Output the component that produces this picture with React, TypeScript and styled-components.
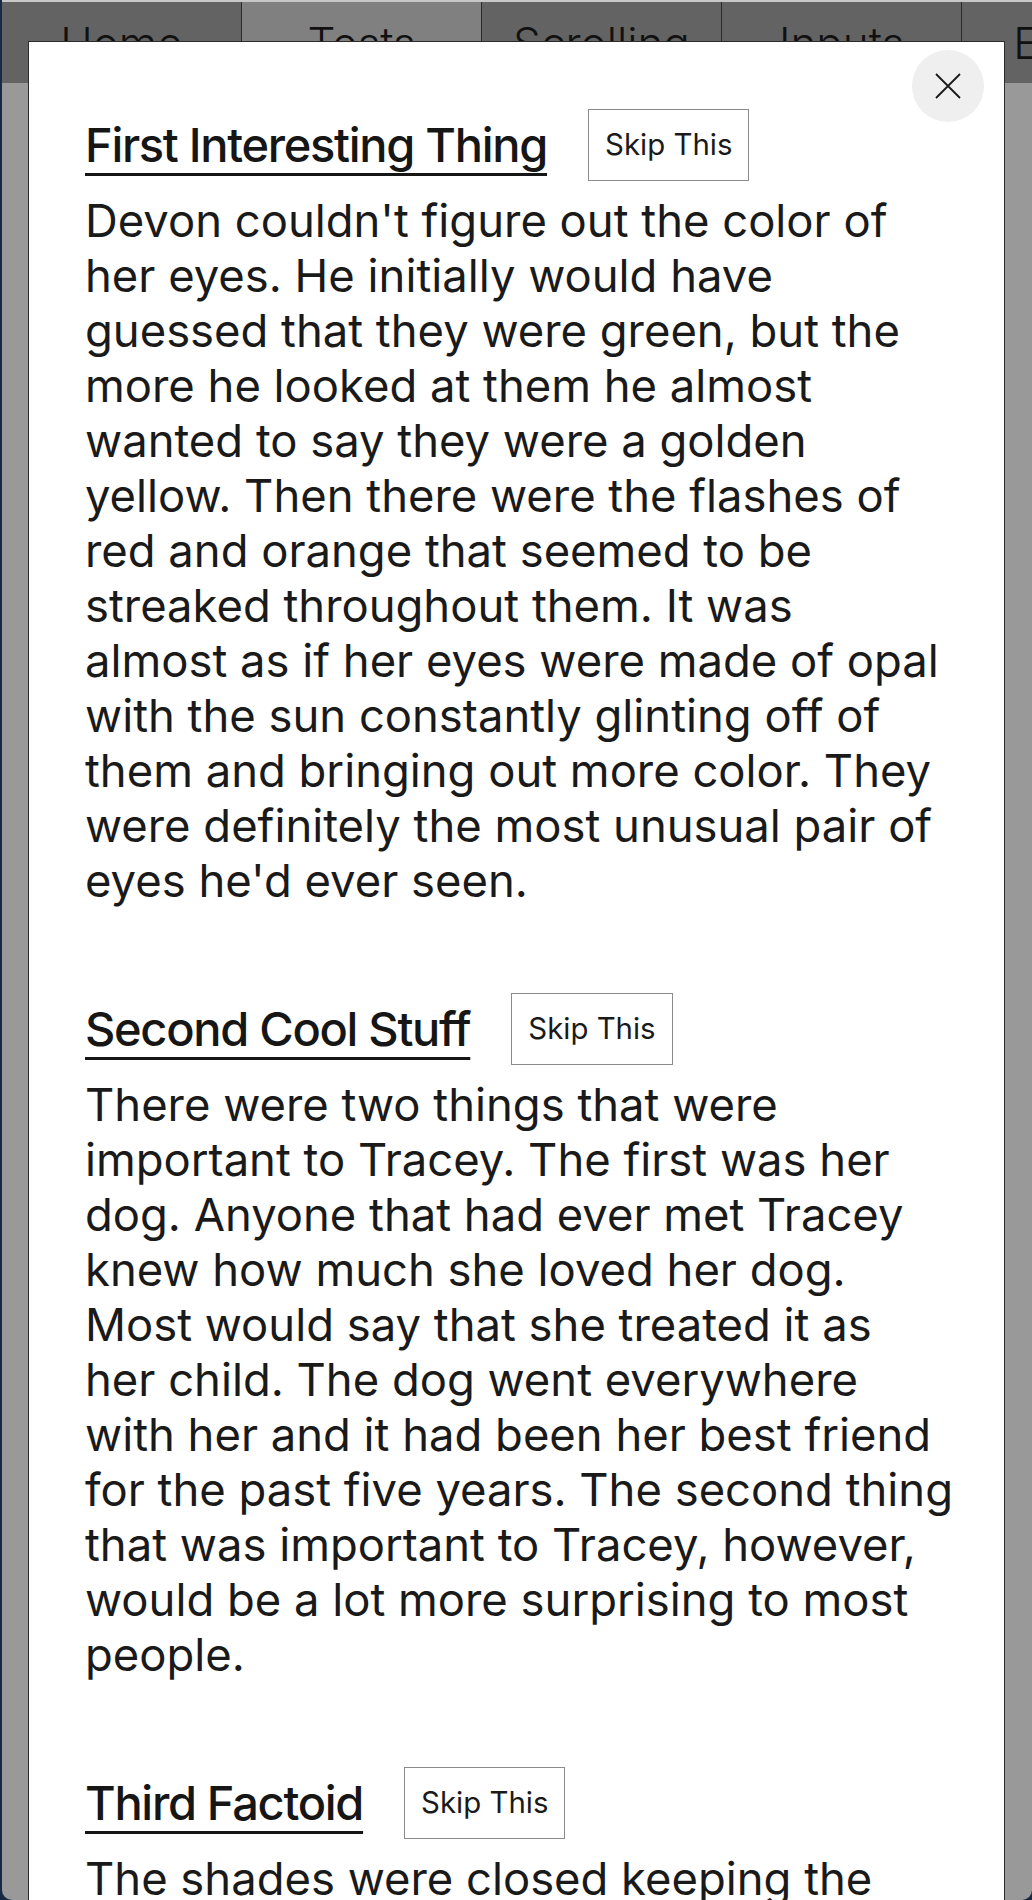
import React from "react";
import styled, { createGlobalStyle } from "styled-components";

const GlobalStyle = createGlobalStyle`
  html, body {
    margin: 0;
    padding: 0;
    background: #172a44;
    font-family: Inter, "Open Sans", sans-serif;
    overflow: hidden;
  }
`;

const Frame = styled.div`
  position: relative;
  margin-left: 2px;
  height: 1900px;
  background: #999999;
  border-radius: 0 0 10px 10px;
  overflow: hidden;
`;

const NavBar = styled.nav`
  display: flex;
  height: 81px;
  border-top: 2px solid #c8c8c8;
  background: #636363;
  overflow: hidden;
`;

const Tab = styled.div<{ $active?: boolean }>`
  flex: 0 0 240px;
  box-sizing: border-box;
  border-right: 1px solid #2a2a2a;
  background: ${(p) => (p.$active ? "#808080" : "#636363")};
  color: #111;
  font-family: Inter, sans-serif;
  font-weight: 300;
  font-size: 44px;
  line-height: 44px;
  padding-top: 19px;
  text-align: center;
  white-space: nowrap;
`;

const Modal = styled.div`
  position: absolute;
  top: 41px;
  left: 26px;
  width: 977px;
  bottom: -400px;
  box-sizing: border-box;
  background: #ffffff;
  border: 1px solid #2b2b2b;
  padding: 67px 40px 0 56px;
  color: #1a1a1a;
`;

const CloseButton = styled.button`
  position: absolute;
  top: 8px;
  right: 20px;
  width: 72px;
  height: 72px;
  border: none;
  border-radius: 50%;
  background: #efefef;
  display: flex;
  align-items: center;
  justify-content: center;
  padding: 0;
  cursor: pointer;
`;

const Section = styled.section`
  & + & {
    margin-top: 85px;
  }
`;

const HeadingRow = styled.div`
  display: flex;
  align-items: center;
  gap: 41px;
  height: 72px;
`;

const Heading = styled.h2`
  margin: 0;
  font-family: Inter, sans-serif;
  font-weight: 500;
  font-size: 47px;
  letter-spacing: -1.3px;
  line-height: 56px;
  color: #161616;
  text-decoration: underline;
  text-decoration-thickness: 3px;
  text-underline-offset: 11px;
  white-space: nowrap;
`;

const SkipButton = styled.button`
  box-sizing: border-box;
  height: 72px;
  padding: 0 16px;
  background: #ffffff;
  border: 1px solid #8a8a8a;
  border-radius: 0;
  font-family: Inter, sans-serif;
  font-size: 29.4px;
  line-height: 36px;
  color: #1a1a1a;
  white-space: nowrap;
  cursor: pointer;
`;

const Paragraph = styled.p`
  margin: 12px 0 0 0;
  font-family: Inter, sans-serif;
  font-size: 45.4px;
  line-height: 55px;
  color: #1a1a1a;
  white-space: nowrap;
`;

const sections = [
  {
    title: "First Interesting Thing",
    lines: [
      "Devon couldn't figure out the color of",
      "her eyes. He initially would have",
      "guessed that they were green, but the",
      "more he looked at them he almost",
      "wanted to say they were a golden",
      "yellow. Then there were the flashes of",
      "red and orange that seemed to be",
      "streaked throughout them. It was",
      "almost as if her eyes were made of opal",
      "with the sun constantly glinting off of",
      "them and bringing out more color. They",
      "were definitely the most unusual pair of",
      "eyes he'd ever seen.",
    ],
  },
  {
    title: "Second Cool Stuff",
    lines: [
      "There were two things that were",
      "important to Tracey. The first was her",
      "dog. Anyone that had ever met Tracey",
      "knew how much she loved her dog.",
      "Most would say that she treated it as",
      "her child. The dog went everywhere",
      "with her and it had been her best friend",
      "for the past five years. The second thing",
      "that was important to Tracey, however,",
      "would be a lot more surprising to most",
      "people.",
    ],
  },
  {
    title: "Third Factoid",
    lines: [
      "The shades were closed keeping the",
      "sun from entering the room. A single",
      "lamp in the corner cast a dim glow",
      "over the desk where the letters lay.",
    ],
  },
];

const tabs = ["Home", "Tests", "Scrolling", "Inputs", "Events"];

export default function App() {
  return (
    <>
      <GlobalStyle />
      <Frame>
        <NavBar>
          {tabs.map((t) => (
            <Tab key={t} $active={t === "Tests"}>
              {t}
            </Tab>
          ))}
        </NavBar>
        <Modal role="dialog">
          <CloseButton aria-label="Close">
            <svg width="26" height="26" viewBox="0 0 26 26">
              <path d="M1 1 L25 25 M25 1 L1 25" stroke="#1a1a1a" strokeWidth="1.8" fill="none" />
            </svg>
          </CloseButton>
          {sections.map((s) => (
            <Section key={s.title}>
              <HeadingRow>
                <Heading>{s.title}</Heading>
                <SkipButton>Skip This</SkipButton>
              </HeadingRow>
              <Paragraph>
                {s.lines.map((line, i) => (
                  <React.Fragment key={i}>
                    {line}
                    {i < s.lines.length - 1 && <br />}
                  </React.Fragment>
                ))}
              </Paragraph>
            </Section>
          ))}
        </Modal>
      </Frame>
    </>
  );
}
